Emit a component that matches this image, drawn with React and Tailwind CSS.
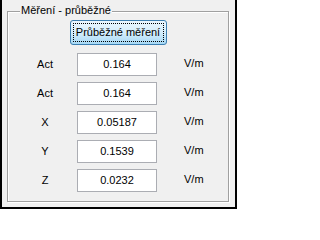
import React from "react";

const rows = [
  { label: "Act", value: "0.164" },
  { label: "Act", value: "0.164" },
  { label: "X", value: "0.05187" },
  { label: "Y", value: "0.1539" },
  { label: "Z", value: "0.0232" }
];

function Row({ label, value }) {
  return (
    <div className="flex items-center h-[23px]">
      <div className="ml-[12px] w-[50px] text-center">
        {label}
      </div>
      <div className="ml-[7px] w-[80px] h-[23px] border border-[#abadb3] bg-white flex items-center justify-center">
        {value}
      </div>
      <div className="ml-[27px] -mt-[2px]">
        V/m
      </div>
    </div>
  );
}

export default function App() {
  return (
    <div
      className="w-[237px] h-[209px] bg-[#f0f0f0] border-x-2 border-b-2 border-black text-[11px] leading-[13px] text-black overflow-hidden"
      style={{ fontFamily: '"Liberation Sans", Arial, sans-serif' }}
    >
      <div className="pt-[11px] pl-[5px]">
        <div className="relative w-[222px] h-[191px] border border-[#a0a0a0] shadow-[1px_1px_0_#fff,inset_1px_1px_0_#fff]">
          <span className="absolute left-[12px] top-[-8px] px-[1px] bg-[#f0f0f0]">
            Měření - průběžné
          </span>

          <div className="flex justify-center pt-[8px]">
            <button className="w-[97px] h-[25px] rounded-[3px] border border-[#3c7fb1] bg-gradient-to-b from-[#eaf6fd] via-[#d5eefc] to-[#a7d9f5] p-[2px]">
              <div className="w-full h-full border border-dotted border-black flex items-center justify-center">
                Průběžné měření
              </div>
            </button>
          </div>

          <div className="flex flex-col gap-[6px] mt-[8px]">
            {rows.map((r, i) => (
              <Row key={i} label={r.label} value={r.value} />
            ))}
          </div>
        </div>
      </div>
    </div>
  );
}
